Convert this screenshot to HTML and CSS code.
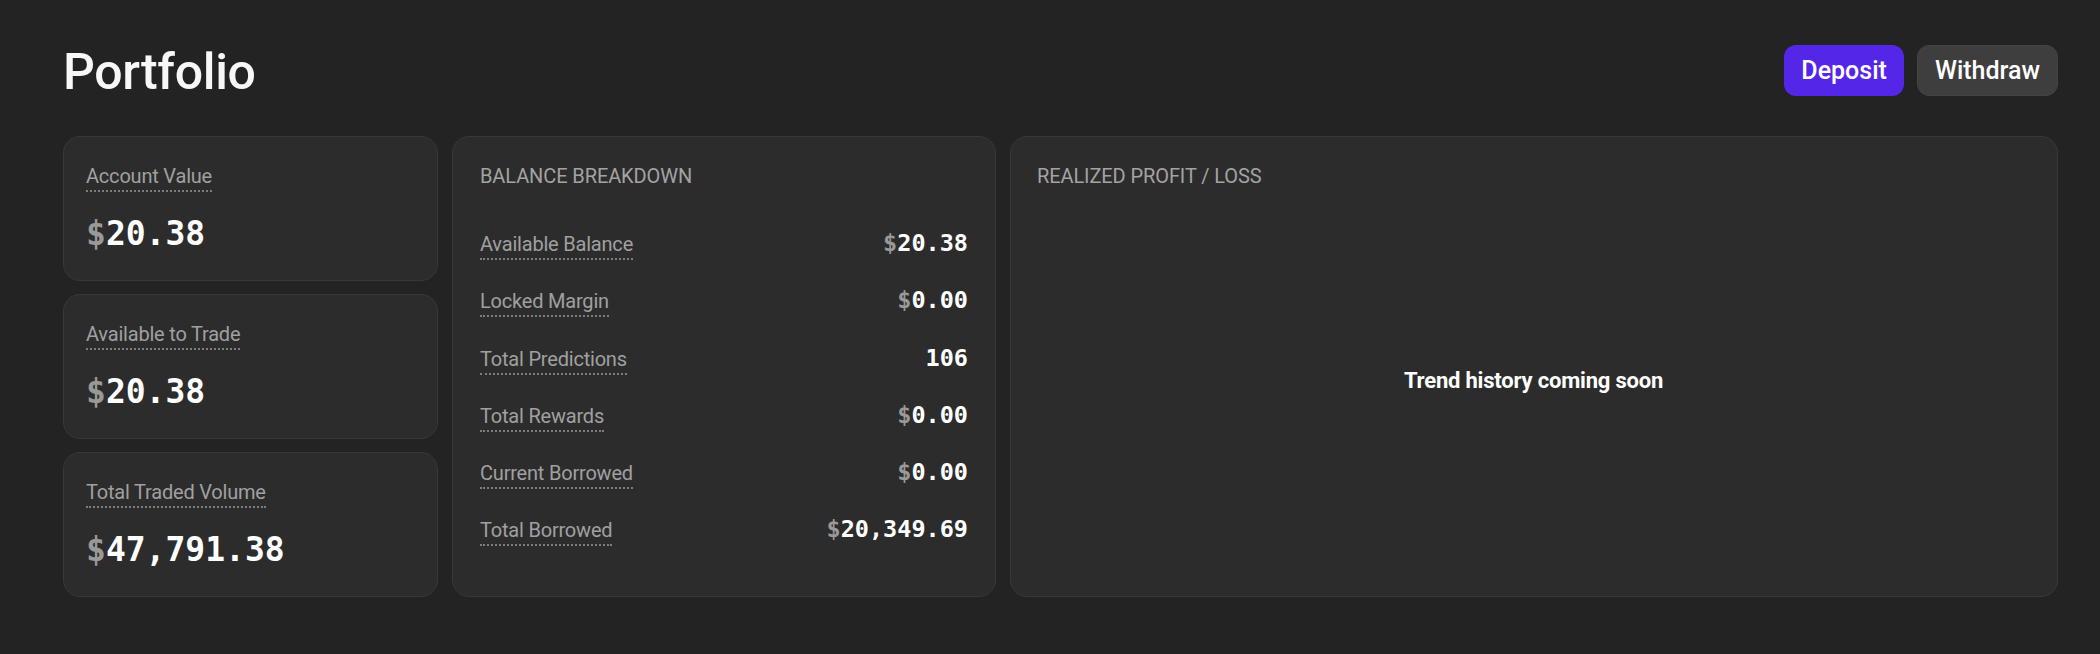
FILE: index.html
```html
<!DOCTYPE html>
<html lang="en">
<head>
<meta charset="utf-8">
<title>Portfolio</title>
<link rel="stylesheet" href="styles.css">
</head>
<body>
<main class="page">
  <header class="header">
    <h1 class="title">Portfolio</h1>
    <div class="actions">
      <button class="btn btn-primary">Deposit</button>
      <button class="btn btn-secondary">Withdraw</button>
    </div>
  </header>
  <section class="grid">
    <div class="stats">
      <div class="card stat">
        <span class="label">Account Value</span>
        <div class="big-value"><span class="cur">$</span>20.38</div>
      </div>
      <div class="card stat">
        <span class="label">Available to Trade</span>
        <div class="big-value"><span class="cur">$</span>20.38</div>
      </div>
      <div class="card stat">
        <span class="label">Total Traded Volume</span>
        <div class="big-value"><span class="cur">$</span>47,791.38</div>
      </div>
    </div>
    <div class="card breakdown">
      <div class="card-title">BALANCE BREAKDOWN</div>
      <div class="rows">
        <div class="row"><span class="label">Available Balance</span><span class="value"><span class="cur">$</span>20.38</span></div>
        <div class="row"><span class="label">Locked Margin</span><span class="value"><span class="cur">$</span>0.00</span></div>
        <div class="row"><span class="label">Total Predictions</span><span class="value">106</span></div>
        <div class="row"><span class="label">Total Rewards</span><span class="value"><span class="cur">$</span>0.00</span></div>
        <div class="row"><span class="label">Current Borrowed</span><span class="value"><span class="cur">$</span>0.00</span></div>
        <div class="row"><span class="label">Total Borrowed</span><span class="value"><span class="cur">$</span>20,349.69</span></div>
      </div>
    </div>
    <div class="card pnl">
      <div class="card-title">REALIZED PROFIT / LOSS</div>
      <div class="empty">Trend history coming soon</div>
    </div>
  </section>
</main>
</body>
</html>
```

FILE: styles.css
```css
html, body {
  margin: 0;
  padding: 0;
  background: #232323;
}
body {
  font-family: Roboto, "Noto Sans", "Liberation Sans", sans-serif;
  color: #f4f4f4;
}
.page {
  padding: 44px 42px 40px 63px;
}
.header {
  display: flex;
  justify-content: space-between;
  align-items: flex-start;
}
.title {
  margin: 0;
  font-size: 50px;
  line-height: 56px;
  font-weight: 500;
  color: #f7f7f7;
  letter-spacing: -0.3px;
}
.actions {
  display: flex;
  gap: 13px;
  margin-top: 1px;
}
.btn {
  height: 51px;
  padding: 0 17px;
  border-radius: 12px;
  font-family: Roboto, "Noto Sans", sans-serif;
  font-size: 25px;
  font-weight: 500;
  color: #ffffff;
  border: 1px solid transparent;
  cursor: pointer;
}
.btn-primary {
  background: #5427e8;
  padding: 0 16px;
}
.btn-secondary {
  background: #3e3e3e;
  border-color: #434343;
}
.grid {
  margin-top: 36px;
  display: grid;
  grid-template-columns: 375px 544px 1fr;
  gap: 14px;
}
.stats {
  display: flex;
  flex-direction: column;
  gap: 13px;
}
.card {
  background: #2c2c2c;
  border: 1px solid #383838;
  border-radius: 17px;
  box-sizing: border-box;
}
.stat {
  flex: 1;
  padding: 25px 22px 22px 22px;
  display: flex;
  flex-direction: column;
  align-items: flex-start;
}
.label {
  font-size: 20px;
  line-height: 28px;
  color: #a0a0a0;
  border-bottom: 2px dotted #7d7d7d;
  letter-spacing: -0.2px;
}
.big-value {
  margin-top: 22px;
  font-family: "DejaVu Sans Mono", "Liberation Mono", monospace;
  font-weight: 700;
  font-size: 33px;
  line-height: 40px;
  color: #ffffff;
}
.cur {
  color: #999999;
}
.card-title {
  font-size: 20px;
  line-height: 28px;
  color: #a3a3a3;
  letter-spacing: -0.1px;
}
.breakdown {
  padding: 25px 27px 50px 27px;
  display: flex;
  flex-direction: column;
}
.rows {
  margin-top: 40px;
  display: flex;
  flex-direction: column;
  gap: 27.3px;
}
.row {
  display: flex;
  justify-content: space-between;
  align-items: baseline;
}
.value {
  font-family: "DejaVu Sans Mono", "Liberation Mono", monospace;
  font-weight: 700;
  font-size: 23.5px;
  line-height: 26px;
  color: #ffffff;
}
.pnl {
  padding: 25px 27px 25px 26px;
  display: flex;
  flex-direction: column;
}
.empty {
  flex: 1;
  display: flex;
  align-items: center;
  justify-content: center;
  font-size: 22px;
  font-weight: 700;
  color: #ffffff;
  letter-spacing: -0.2px;
}
```
